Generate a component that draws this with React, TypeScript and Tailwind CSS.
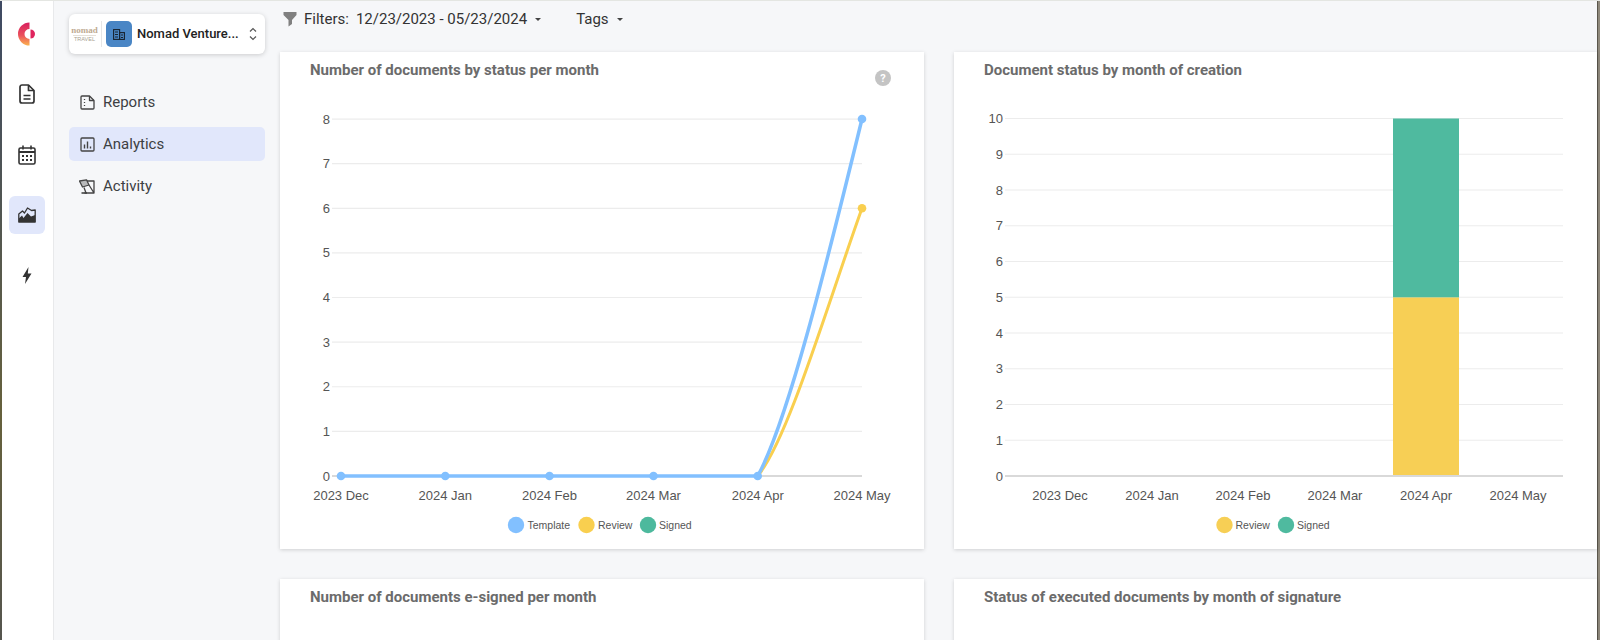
const railItem = 'flex h-[38px] w-9 items-center justify-center rounded-md';

function Logo() {
  return (
    <svg width="18" height="24" viewBox="0 0 18 24">
      <defs>
        <linearGradient id="logoGrad" x1="0" y1="0" x2="0" y2="1">
          <stop offset="0" stopColor="#d81f5f" />
          <stop offset="0.55" stopColor="#ea4f5c" />
          <stop offset="1" stopColor="#fbb24f" />
        </linearGradient>
      </defs>
      <path d="M11.5 0.5A11.5 11.5 0 0 0 11.5 23.5V17A5 5 0 0 1 11.5 7Z" fill="url(#logoGrad)" />
      <path d="M12.5 7.5A4.5 4.5 0 0 1 12.5 16.5Z" fill="#e0245e" />
    </svg>
  );
}

function DocIcon() {
  return (
    <svg width="16" height="20" viewBox="0 0 16 20" fill="none" stroke="#333" strokeWidth="1.7" strokeLinejoin="round">
      <path d="M1 3a2 2 0 0 1 2-2h6.5L15 6.5V17a2 2 0 0 1-2 2H3a2 2 0 0 1-2-2Z" />
      <path d="M9.5 1v5.5H15" />
      <path d="M4.5 11.5h7M4.5 15h7" />
    </svg>
  );
}

function CalendarIcon() {
  return (
    <svg width="18" height="20" viewBox="0 0 18 20" fill="none" stroke="#333" strokeWidth="1.6">
      <rect x="1" y="3" width="16" height="16" rx="1.5" />
      <path d="M1 7h16" strokeWidth="2" />
      <path d="M5 0.5v4M13 0.5v4" />
      <path d="M4 11h2M8 11h2M12 11h2M4 15h2M8 15h2M12 15h2" strokeWidth="2" />
    </svg>
  );
}

function MountainIcon() {
  return (
    <svg width="18" height="16" viewBox="0 0 18 16">
      <path d="M0.8 7 4.5 4 6.5 6 9.5 1 13.5 3.5 17.2 3V15H0.8Z" fill="none" stroke="#333" strokeWidth="1.3" strokeLinejoin="round" />
      <path d="M0.8 15V11.5L4 8.5 5.5 11 9.5 6 13 9.5 17.2 8V15Z" fill="#333" />
    </svg>
  );
}

function BoltIcon() {
  return (
    <svg width="10" height="17" viewBox="0 0 10 17">
      <path d="M6.5 0 0.5 10H4L3 17 9.5 6.5H5.8Z" fill="#333" />
    </svg>
  );
}

function ReportsIcon() {
  return (
    <svg width="15" height="15" viewBox="0 0 15 15" fill="none" stroke="#444" strokeWidth="1.3" strokeLinejoin="round">
      <path d="M1 2a1 1 0 0 1 1-1h7.5L14 5.5V13a1 1 0 0 1-1 1H2a1 1 0 0 1-1-1Z" />
      <path d="M9.5 1v4.5H14" />
      <path d="M4.5 4v1M4.5 7v1M4.5 10v1" />
    </svg>
  );
}

function AnalyticsIcon() {
  return (
    <svg width="15" height="15" viewBox="0 0 15 15" fill="none" stroke="#444" strokeWidth="1.3">
      <rect x="1" y="1" width="13" height="13" rx="1" />
      <path d="M4.5 7.5V11.5M7.5 4.5V11.5M10.5 9.5V11.5" strokeWidth="1.4" />
    </svg>
  );
}

function ActivityIcon() {
  return (
    <svg width="16" height="15" viewBox="0 0 16 15" fill="none" stroke="#444" strokeWidth="1.3" strokeLinejoin="round">
      <path d="M0.5 2 7.5 0.8 10 6 3.5 8Z" fill="#444" fillOpacity="0.35" />
      <path d="M8 2h7v12H5.5M15 14 10 6" />
      <path d="M5 8.5 7 14" />
      <path d="M2.5 14H8" strokeWidth="1.6" />
    </svg>
  );
}

function BuildingIcon() {
  return (
    <svg width="12" height="11" viewBox="0 0 12 11" fill="none" stroke="#17222e" strokeWidth="1.1">
      <rect x="0.6" y="0.6" width="6" height="9.8" />
      <rect x="6.6" y="3.6" width="4.8" height="6.8" />
      <path d="M2 3h3M2 5.5h3M2 8h3M8 6h2M8 8.5h2" strokeWidth="1" />
    </svg>
  );
}

function Selector() {
  return (
    <div className="flex h-10 w-[196px] items-center rounded-md bg-white pl-1 pr-2 shadow-[0_1px_5px_rgba(0,0,0,0.18)]">
      <div className="flex w-[23px] flex-col items-center">
        <span className="font-['Liberation_Serif',serif] text-[9px] font-bold leading-[8px] text-[#c0ab92]">nomad</span>
        <span className="mt-px w-full border-t border-[#e5e0d8] text-center font-['Liberation_Sans',sans-serif] text-[5.5px] leading-[7px] text-[#a99f91]">TRAVEL</span>
      </div>
      <div className="ml-[5px] h-[26px] w-px bg-[#e6e6e6]" />
      <div className="ml-[4px] flex h-[26px] w-[26px] items-center justify-center rounded-[5px] bg-[#4a86c5]">
        <BuildingIcon />
      </div>
      <span className="ml-[5px] flex-1 truncate text-[13px] font-medium text-[#222]">Nomad Venture...</span>
      <svg width="8" height="14" viewBox="0 0 8 14" fill="none" stroke="#555" strokeWidth="1.2">
        <path d="M1 4.5 4 1.5 7 4.5M1 9.5 4 12.5 7 9.5" />
      </svg>
    </div>
  );
}

function NavRow({ label, icon, active }: { label: string; icon: React.ReactNode; active?: boolean }) {
  return (
    <div className={`flex h-[34px] w-[196px] items-center rounded-[5px] pl-[10px] ${active ? 'bg-[#e1e7fb]' : ''}`}>
      <span className="flex w-4 justify-center">{icon}</span>
      <span className="ml-[8px] text-[15px] text-[#3d4043]">{label}</span>
    </div>
  );
}

function Caret() {
  return <span className="ml-2 inline-block h-0 w-0 border-x-[3px] border-t-[3px] border-x-transparent border-t-[#444]" />;
}

function Grid({ x1, x2, rows }: { x1: number; x2: number; rows: { label: number; y: number }[] }) {
  return (
    <g>
      {rows.map((r) => (
        <g key={r.label}>
          <line x1={x1} x2={x2} y1={r.y} y2={r.y} stroke={r.label === 0 ? '#d9d9d9' : '#ececec'} strokeWidth={r.label === 0 ? 2 : 1.2} />
          <text x={x1 - 2} y={r.y + 4.5} textAnchor="end" fontSize="13" fill="#555">
            {r.label}
          </text>
        </g>
      ))}
    </g>
  );
}

function XLabels({ xs }: { xs: number[] }) {
  const months = ['2023 Dec', '2024 Jan', '2024 Feb', '2024 Mar', '2024 Apr', '2024 May'];
  return (
    <g>
      {months.map((m, i) => (
        <text key={m} x={xs[i]} y={500} textAnchor="middle" fontSize="13" fill="#555">
          {m}
        </text>
      ))}
    </g>
  );
}

function LegendItem({ dot, text, label, color }: { dot: number; text: number; label: string; color: string }) {
  return (
    <g>
      <circle cx={dot} cy={525} r={8.2} fill={color} />
      <text x={text} y={528.5} fontSize="10.5" fill="#555">
        {label}
      </text>
    </g>
  );
}

const chartFont = "font-['Liberation_Sans',Arial,sans-serif]";

function LineChart() {
  const xs = [341, 445.3, 549.5, 653.5, 757.7, 862];
  const rows = [8, 7, 6, 5, 4, 3, 2, 1, 0].map((n) => ({ label: n, y: 476 - n * 44.62 }));
  return (
    <svg viewBox="280 81 644 468" width="644" height="468" className={`block ${chartFont}`}>
      <Grid x1={332} x2={862} rows={rows} />
      <path d="M757.7 476C787.7 440 827 306 862 208.3" fill="none" stroke="#f9cf4f" strokeWidth="3" />
      <circle cx="862" cy="208.3" r="4.3" fill="#f9cf4f" />
      <path d="M341 476H757.7C787.7 422 827 262.5 862 119" fill="none" stroke="#82c0ff" strokeWidth="3.5" />
      {xs.slice(0, 5).map((x) => (
        <circle key={x} cx={x} cy={476} r={4.3} fill="#82c0ff" />
      ))}
      <circle cx="862" cy="119" r="4.3" fill="#82c0ff" />
      <XLabels xs={xs} />
      <LegendItem dot={516} text={527.5} label="Template" color="#82c0ff" />
      <LegendItem dot={586.5} text={598} label="Review" color="#f9cf4f" />
      <LegendItem dot={648} text={659} label="Signed" color="#4db99d" />
    </svg>
  );
}

function BarChart() {
  const xs = [1060, 1152, 1243, 1335, 1426, 1518];
  const rows = [10, 9, 8, 7, 6, 5, 4, 3, 2, 1, 0].map((n) => ({ label: n, y: 476 - n * 35.75 }));
  return (
    <svg viewBox="954 81 643 468" width="643" height="468" className={`block ${chartFont}`}>
      <Grid x1={1005} x2={1563} rows={rows} />
      <rect x="1393" y="297.3" width="66" height="177.7" fill="#f7cf55" />
      <rect x="1393" y="118.5" width="66" height="178.8" fill="#4fba9f" />
      <XLabels xs={xs} />
      <LegendItem dot={1224.5} text={1235.5} label="Review" color="#f7cf55" />
      <LegendItem dot={1286} text={1297} label="Signed" color="#4fba9f" />
    </svg>
  );
}

function Card({ title, children, help }: { title: string; children?: React.ReactNode; help?: boolean }) {
  return (
    <section className="relative bg-white shadow-[0_1px_4px_rgba(0,0,0,0.16)]">
      <h3 className="pb-px pl-[30px] pt-[8px] text-[15px] font-bold leading-5 text-[#6b6b6b]">{title}</h3>
      {help && (
        <span className="absolute right-[33px] top-[18px] flex h-4 w-4 items-center justify-center rounded-full bg-[#c4c4c4] text-[11px] font-bold leading-none text-white">
          ?
        </span>
      )}
      {children}
    </section>
  );
}

export default function App() {
  return (
    <div className="flex h-[640px] w-[1600px] overflow-hidden border-t border-[#e4e6e2] bg-[#f6f7f9] font-['Roboto',sans-serif]">
      <div className="w-[2px] shrink-0 bg-gradient-to-b from-[#3f4a63] via-[#66613c] via-65% to-[#55554e]" />
      <aside className="flex w-[52px] shrink-0 flex-col items-center gap-[22.3px] border-r border-[#e8e9eb] bg-white pr-px pt-[14px]">
        <div className={railItem}><Logo /></div>
        <div className={railItem}><DocIcon /></div>
        <div className={railItem}><CalendarIcon /></div>
        <div className={`${railItem} bg-[#e1e7fb]`}><MountainIcon /></div>
        <div className={railItem}><BoltIcon /></div>
      </aside>
      <nav className="w-[226px] shrink-0 pl-[15px] pt-[13px]">
        <Selector />
        <div className="mt-[31px] flex flex-col gap-2">
          <NavRow label="Reports" icon={<ReportsIcon />} />
          <NavRow label="Analytics" icon={<AnalyticsIcon />} active />
          <NavRow label="Activity" icon={<ActivityIcon />} />
        </div>
      </nav>
      <main className="min-w-0 flex-1">
        <div className="flex h-[51px] items-start pt-[7px] text-[15px] text-[#333]">
          <svg className="ml-[3px] mt-[3px]" width="14" height="16" viewBox="0 0 14 16">
            <path d="M0.5 1H13.5V4L9 9V13L5.5 15.5V9L0.5 4Z" fill="#808080" />
          </svg>
          <span className="ml-[7px]">Filters:</span>
          <span className="ml-[7px] flex items-center">12/23/2023 - 05/23/2024<Caret /></span>
          <span className="ml-[35px] flex items-center">Tags<Caret /></span>
        </div>
        <div className="grid grid-cols-[644px_643px] gap-x-[30px] gap-y-[30px]">
          <Card title="Number of documents by status per month" help><LineChart /></Card>
          <Card title="Document status by month of creation"><BarChart /></Card>
          <Card title="Number of documents e-signed per month"><div className="h-[40px]" /></Card>
          <Card title="Status of executed documents by month of signature"><div className="h-[40px]" /></Card>
        </div>
      </main>
      <div className="w-[3px] shrink-0 border-l border-[#5a564c] bg-[#8f897c]" />
    </div>
  );
}
